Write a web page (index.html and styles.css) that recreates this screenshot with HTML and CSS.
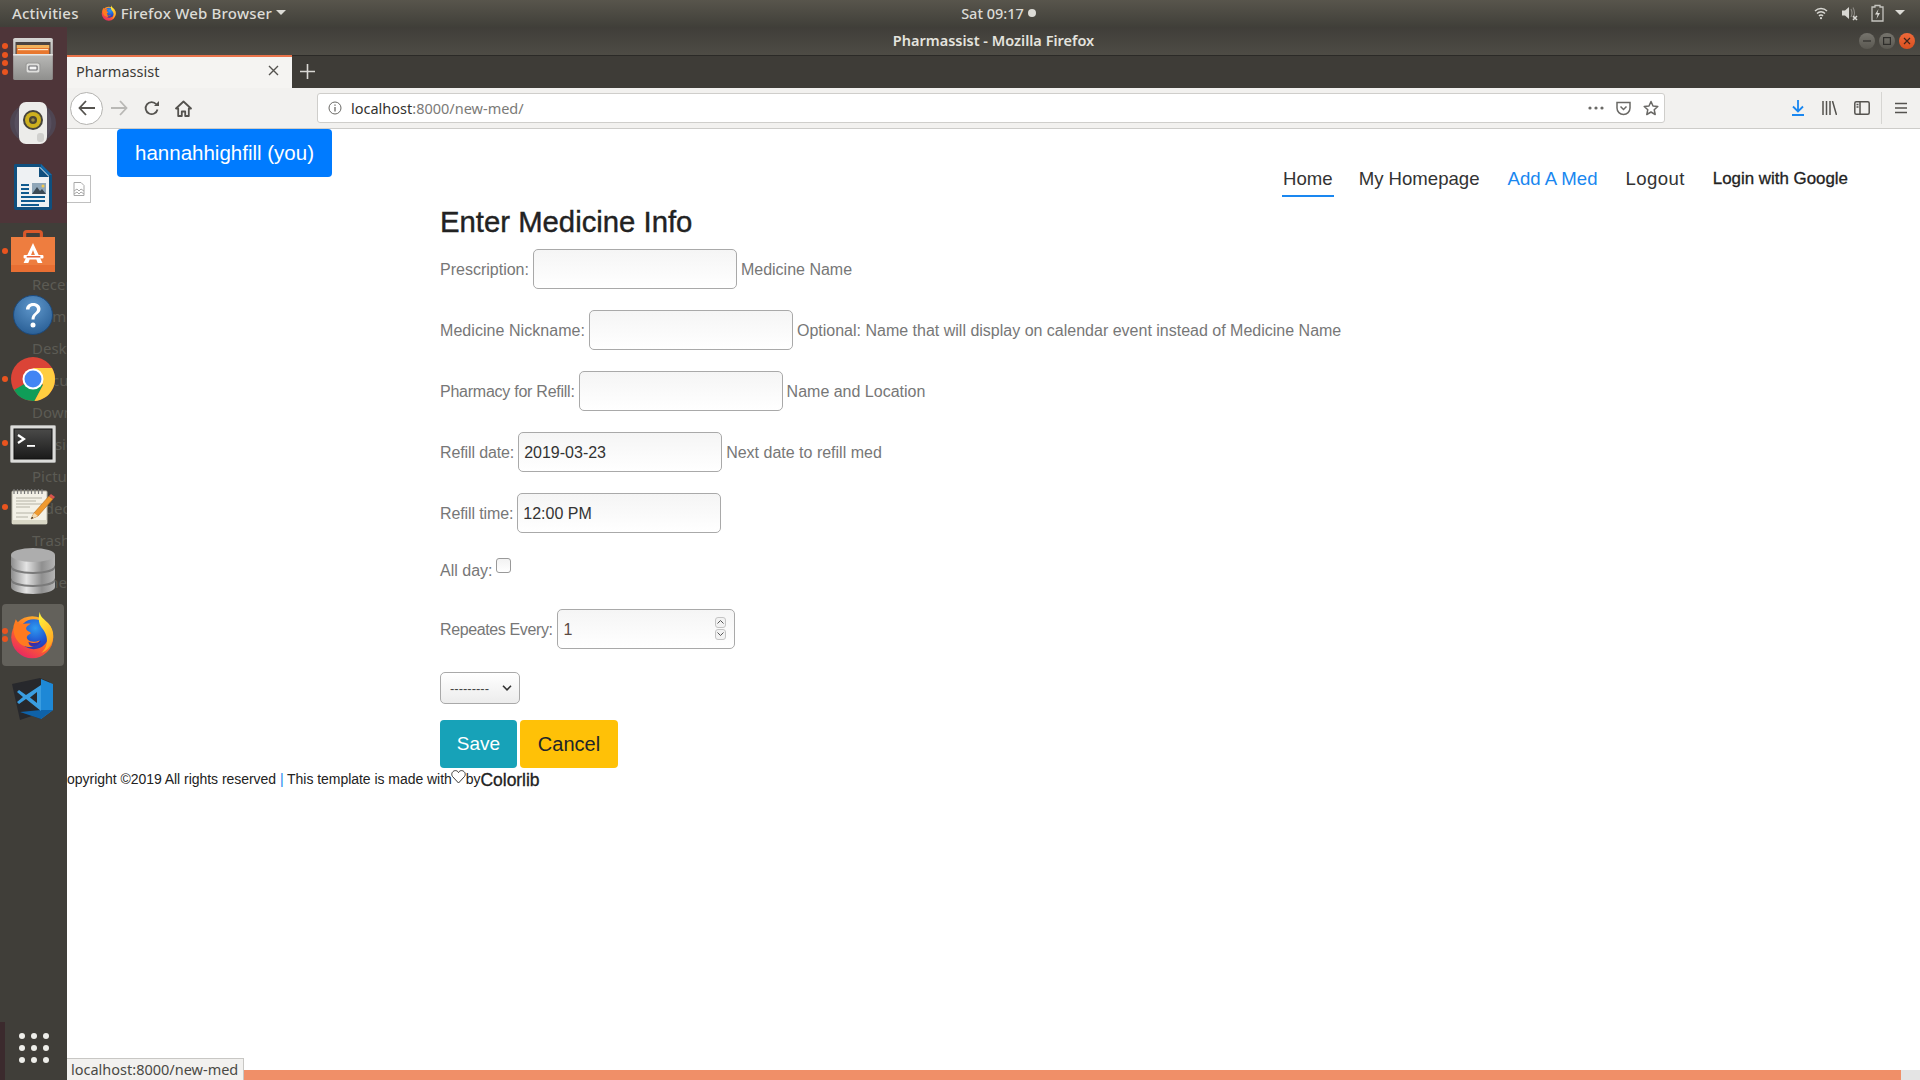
FILE: index.html
```html
<!DOCTYPE html>
<html lang="en">
<head>
    <meta charset="UTF-8">
    <title>Pharmassist - Mozilla Firefox</title>
    <link rel="stylesheet" href="styles.css">
</head>
<body>
    <!-- GNOME top bar -->
    <div class="topbar">
        <div class="topbar-left">
            <span>Activities</span>
            <span class="app-menu">
                <svg class="fx-small" width="16" height="16" viewBox="0 0 32 32"><use href="#fx"/></svg>
                Firefox Web Browser
                <span class="caret"></span>
            </span>
        </div>
        <div class="clock">Sat 09:17 <span class="clock-dot"></span></div>
        <div class="tray">
            <svg width="14" height="14" viewBox="0 0 14 14" fill="none" stroke="#d8d7d2" stroke-width="1.4"><path d="M1 5a8.5 8.5 0 0 1 12 0M3 7.500a5.500 5.500 0 0 1 8 0M5 10a2.600 2.600 0 0 1 4 0"/><circle cx="7" cy="12.200" r="1.100" fill="#d8d7d2" stroke="none"/></svg>
            <svg width="17" height="16" viewBox="0 0 17 16"><path d="M1 5.500h3L8 2v12l-4-3.500H1z" fill="#d8d7d2"/><path d="M10 4q2 4 0 8M12 2.500q3 5.500 0 11" fill="none" stroke="#8d8b85" stroke-width="1.100"/><path d="M12 11l4 4M16 11l-4 4" stroke="#d8d7d2" stroke-width="1.500"/></svg>
            <svg width="13" height="18" viewBox="0 0 13 18"><path d="M4 1.500h5v1.500h3v14H1V3h3z" fill="none" stroke="#c6c5c0" stroke-width="1.300"/><path d="M7.500 5L4 10.500h2.500L5.500 15 9 9H6.500z" fill="#d8d7d2"/></svg>
            <span class="caret caret-tray"></span>
        </div>
    </div>

    <div class="desktop">
        <!-- Ubuntu dock -->
        <aside class="dock">
            <ul class="ghost-places">
                <li>Recent</li>
                <li>Home</li>
                <li>Desktop</li>
                <li>Documents</li>
                <li>Downloads</li>
                <li>Music</li>
                <li>Pictures</li>
                <li>Videos</li>
                <li>Trash</li>
                <li class="ghost-other">Other</li>
            </ul>
            <div class="dock-tint"></div>
            <div class="dock-foot"></div>

            <div class="dock-item">
                <span class="dots"><i></i><i></i><i></i><i></i></span>
                <svg width="42" height="44" viewBox="0 0 36 44" preserveAspectRatio="none">
                    <defs><linearGradient id="cab" x1="0" y1="0" x2="0" y2="1"><stop offset="0" stop-color="#d4d4d2"/><stop offset="1" stop-color="#8f8f8d"/></linearGradient></defs>
                    <rect x="1" y="1" width="34" height="42" rx="1.500" fill="url(#cab)"/>
                    <rect x="3" y="5" width="30" height="13" fill="#4a4340"/>
                    <rect x="4" y="8" width="28" height="3" fill="#f2b25a"/>
                    <rect x="4" y="11" width="28" height="6" fill="#e8772e"/>
                    <rect x="5" y="12" width="26" height="1.200" fill="#fbe6c8"/>
                    <rect x="1" y="17" width="34" height="1.500" fill="#e8e8e6"/>
                    <rect x="12" y="26" width="12" height="10" rx="2" fill="#dededc" stroke="#9a9a98"/>
                    <rect x="14.500" y="29" width="7" height="4" rx=".5" fill="#f4f4f4" stroke="#66666a"/>
                </svg>
            </div>
            <div class="dock-item">
                <svg width="48" height="46" viewBox="0 0 48 46">
                    <ellipse cx="24" cy="23" rx="23" ry="20" fill="#4f5f78" opacity=".4"/>
                    <ellipse cx="24" cy="23" rx="18.500" ry="20" fill="#5e5668" opacity=".6"/>
                    <rect x="10" y="2" width="28" height="42" rx="7" fill="#ececea"/>
                    <circle cx="24" cy="20" r="10" fill="#45433c"/>
                    <circle cx="24" cy="20" r="8" fill="#cdb01f"/>
                    <circle cx="24" cy="20" r="4" fill="#4a4434"/>
                    <circle cx="24" cy="20" r="1.800" fill="#9a8a44"/>
                    <rect x="28" y="33" width="7" height="9" rx="3" fill="#d0d0ce"/>
                </svg>
            </div>
            <div class="dock-item">
                <svg width="40" height="48" viewBox="0 0 40 48">
                    <path d="M2 1h26l11 11v33a2 2 0 0 1-2 2H3a2 2 0 0 1-2-2V2z" fill="#0f4f7e"/>
                    <path d="M28 1l11 11H28z" fill="#1469a6"/>
                    <path d="M4 4h23l9 9v31H4z" fill="#eef1f3"/>
                    <path d="M26 4l10 10H26z" fill="#0f4f7e"/>
                    <rect x="8" y="21" width="8" height="2" fill="#0f5a8e"/>
                    <rect x="8" y="25" width="8" height="2" fill="#0f5a8e"/>
                    <rect x="8" y="29" width="8" height="2" fill="#0f5a8e"/>
                    <rect x="8" y="33" width="24" height="2" fill="#0f5a8e"/>
                    <rect x="8" y="37" width="24" height="2" fill="#0f5a8e"/>
                    <rect x="8" y="41" width="18" height="2" fill="#0f5a8e"/>
                    <rect x="19" y="20" width="14" height="11" fill="#8fa6b8"/>
                    <path d="M19 31l5-7 3 4 2-2 4 5z" fill="#3c4a55"/>
                    <circle cx="30" cy="23" r="1.500" fill="#f2c94c"/>
                </svg>
            </div>
            <div class="dock-item">
                <span class="dots"><i></i></span>
                <svg width="44" height="44" viewBox="0 0 42 44" preserveAspectRatio="none">
                    <path d="M13 11V4.500A2 2 0 0 1 15 2.500h12a2 2 0 0 1 2 2V11" fill="none" stroke="#d9582a" stroke-width="3"/>
                    <rect x="0" y="8" width="42" height="35" fill="#ee7d3f"/>
                    <rect x="0" y="36" width="42" height="7" fill="#e86f33"/>
                    <path d="M21 14l9 20h-4.500l-1.300-3.500h-6.400L16.500 34H12zM21 21l-2 5.500h4z" fill="#fff"/>
                    <rect x="12" y="26" width="19" height="3.500" rx="1" fill="#fff"/>
                    <rect x="15" y="27" width="13" height="1.500" fill="#e8643a"/>
                </svg>
            </div>
            <div class="dock-item">
                <svg width="40" height="40" viewBox="0 0 40 40">
                    <defs><radialGradient id="help" cx=".5" cy=".3" r=".8"><stop offset="0" stop-color="#5f97cb"/><stop offset="1" stop-color="#23588f"/></radialGradient></defs>
                    <circle cx="20" cy="20" r="19.500" fill="url(#help)" stroke="#1d4a7c"/>
                    <path d="M13 14.500c0-4 3.200-6.500 7.200-6.500 4.200 0 7.300 2.400 7.300 6 0 5-6 5-6 10.500h-3c0-6.500 5.500-6.500 5.500-10.300 0-1.900-1.500-3.200-3.700-3.200-2.300 0-3.800 1.400-3.800 3.500z" fill="#fff"/>
                    <circle cx="20" cy="30" r="2.500" fill="#fff"/>
                </svg>
            </div>
            <div class="dock-item">
                <span class="dots"><i></i></span>
                <svg width="44" height="44" viewBox="0 0 44 44">
                    <circle cx="22" cy="22" r="22" fill="#db4437"/>
                    <path d="M22 22L3 33A22 22 0 0 0 22 44h1.500L32 28z" fill="#0f9d58"/>
                    <path d="M22 11h19a22 22 0 0 1-17.500 33L32 28z" fill="#ffcd40"/>
                    <circle cx="22" cy="22" r="10.500" fill="#fff"/>
                    <circle cx="22" cy="22" r="8.500" fill="#4285f4"/>
                </svg>
            </div>
            <div class="dock-item dock-term">
                <span class="dots"><i></i></span>
                <svg width="46" height="38" viewBox="0 0 46 38">
                    <defs><linearGradient id="term" x1="0" y1="0" x2="0" y2="1"><stop offset="0" stop-color="#4a4a49"/><stop offset="1" stop-color="#1a1a1a"/></linearGradient></defs>
                    <rect x=".5" y=".5" width="45" height="37" rx="1" fill="#dcdcda" stroke="#a9a9a7"/>
                    <rect x="4" y="4" width="38" height="30" fill="url(#term)" stroke="#111"/>
                    <path d="M8 10l6 4-6 4" fill="none" stroke="#fff" stroke-width="2.200"/>
                    <rect x="17" y="20" width="8" height="1.800" fill="#fff"/>
                </svg>
            </div>
            <div class="dock-item">
                <span class="dots"><i></i></span>
                <svg width="46" height="38" viewBox="0 0 46 38">
                    <rect x="2" y="3" width="35" height="33" rx="1" fill="#f3f1e7" stroke="#b7b5a8"/>
                    <rect x="2" y="32" width="35" height="4" fill="#d9d7c6"/>
                    <path d="M4 1v5M7.500 1v5M11 1v5M14.500 1v5M18 1v5M21.500 1v5M25 1v5M28.500 1v5M32 1v5" stroke="#777" stroke-width="1.200"/>
                    <path d="M6 10h26M6 13h20M6 16h26M6 19h14M6 25h20M6 29h12" stroke="#b5b3a6" stroke-width="1"/>
                    <path d="M21 31l3-6L39 8l4 3-15 17z" fill="#ef9a30" stroke="#b66a1a" stroke-width=".6"/>
                    <path d="M39 8l2-2 4 3-2 2z" fill="#d9534f"/>
                    <path d="M21 31l3-6 4 3z" fill="#f3dcb4"/>
                    <path d="M21 31l1-2.200 1.500 1.200z" fill="#222"/>
                </svg>
            </div>
            <div class="dock-item">
                <svg width="46" height="48" viewBox="0 0 46 48">
                    <defs><linearGradient id="disk" x1="0" y1="0" x2="1" y2="0"><stop offset="0" stop-color="#8c8c8c"/><stop offset=".35" stop-color="#e4e4e4"/><stop offset=".7" stop-color="#8f8f8f"/><stop offset="1" stop-color="#b5b5b5"/></linearGradient></defs>
                    <path d="M1 34v6c0 4 10 7 22 7s22-3 22-7v-6z" fill="url(#disk)"/>
                    <ellipse cx="23" cy="34" rx="22" ry="6" fill="#7a7a7a"/>
                    <path d="M1 21v10c0 4 10 7 22 7s22-3 22-7V21z" fill="url(#disk)"/>
                    <ellipse cx="23" cy="21" rx="22" ry="6" fill="#7a7a7a"/>
                    <path d="M1 8v10c0 4 10 7 22 7s22-3 22-7V8z" fill="url(#disk)"/>
                    <ellipse cx="23" cy="8" rx="22" ry="7" fill="#adadad"/>
                </svg>
            </div>
            <div class="dock-item dock-active">
                <span class="dots"><i></i><i></i></span>
                <svg width="48" height="48" viewBox="0 0 32 32"><use href="#fx"/></svg>
            </div>
            <div class="dock-item">
                <svg width="42" height="42" viewBox="0 0 42 42">
                    <path d="M0 6L28 0l10 4v28L8 42z" fill="#27282c"/>
                    <path d="M29 1l12 5v26L29 41z" fill="#1e88d6"/>
                    <path d="M29 1v40L8 34z" fill="#27282c"/>
                    <path d="M8 34l21-2 12 0-12 9z" fill="#0f62a8"/>
                    <path d="M29 7v26L14 21 7 26l-2-2 6-5-6-5 2-2 7 5z" fill="#3a9de0"/>
                    <path d="M25 14v11l-7-5.500z" fill="#27282c"/>
                </svg>
            </div>
            <div class="dock-apps">
                <i></i><i></i><i></i><i></i><i></i><i></i><i></i><i></i><i></i>
            </div>
        </aside>

        <div class="firefox">
            <!-- window title -->
            <div class="titlebar">
                <span>Pharmassist - Mozilla Firefox</span>
                <div class="window-buttons">
                    <span class="win-btn"><svg width="8" height="8" viewBox="0 0 8 8"><path d="M0 4h8" stroke="#2f2e2b" stroke-width="1.200"/></svg></span>
                    <span class="win-btn"><svg width="8" height="8" viewBox="0 0 8 8"><rect x=".6" y=".6" width="6.800" height="6.800" fill="none" stroke="#2f2e2b" stroke-width="1.200"/></svg></span>
                    <span class="win-btn win-close"><svg width="8" height="8" viewBox="0 0 8 8"><path d="M1 1l6 6M7 1L1 7" stroke="#40241a" stroke-width="1.200"/></svg></span>
                </div>
            </div>

            <!-- tab strip -->
            <div class="tabstrip">
                <div class="tab">
                    <span>Pharmassist</span>
                    <svg width="11" height="11" viewBox="0 0 11 11"><path d="M1 1l9 9M10 1l-9 9" stroke="#55534f" stroke-width="1.400"/></svg>
                </div>
                <svg class="new-tab" width="15" height="15" viewBox="0 0 15 15"><path d="M7.500 0v15M0 7.500h15" stroke="#d9d8d4" stroke-width="1.600"/></svg>
            </div>

            <!-- nav bar -->
            <div class="navbar">
                <span class="back-btn">
                    <svg width="18" height="16" viewBox="0 0 18 16" fill="none" stroke="#55534f" stroke-width="1.800"><path d="M8 1L1.500 8 8 15M2 8h15"/></svg>
                </span>
                <svg class="fwd" width="18" height="16" viewBox="0 0 18 16" fill="none" stroke="#b9b8b5" stroke-width="1.800"><path d="M10 1l6.500 7L10 15M16 8H1"/></svg>
                <svg class="reload" width="16" height="16" viewBox="0 0 16 16" fill="none" stroke="#55534f" stroke-width="1.800"><path d="M13.500 9.500a6 6 0 1 1-1.200-5.200"/><path d="M15 1v5h-5z" fill="#55534f" stroke="none"/></svg>
                <svg class="home" width="17" height="17" viewBox="0 0 17 17"><path d="M8.500 1.500L1 8.500h2.200V16h3.600v-4.500h3.400V16h3.600V8.500H16z" fill="none" stroke="#55534f" stroke-width="1.800" stroke-linejoin="round"/></svg>
                <div class="urlbar">
                    <svg width="14" height="14" viewBox="0 0 14 14" fill="none" stroke="#6a6966"><circle cx="7" cy="7" r="6"/><path d="M7 6v4.500M7 3.500v1.200" stroke-width="1.300"/></svg>
                    <span class="url"><span class="url-host">localhost</span>:8000/new-med/</span>
                    <span class="url-actions">
                        <svg width="16" height="4" viewBox="0 0 16 4" fill="#6a6966"><circle cx="2" cy="2" r="1.600"/><circle cx="8" cy="2" r="1.600"/><circle cx="14" cy="2" r="1.600"/></svg>
                        <svg width="15" height="15" viewBox="0 0 15 15" fill="none" stroke="#6a6966" stroke-width="1.500"><path d="M1 1.500h13v5.500a6.500 6.500 0 0 1-13 0z"/><path d="M4.500 5.500l3 3 3-3"/></svg>
                        <svg width="16" height="16" viewBox="0 0 16 16" fill="none" stroke="#6a6966" stroke-width="1.500" stroke-linejoin="round"><path d="M8 1.500l2 4.500 4.800.5-3.600 3.200 1 4.800L8 12l-4.200 2.500 1-4.800L1.200 6.500 6 6z"/></svg>
                    </span>
                </div>
                <div class="toolbar-right">
                    <svg width="14" height="16" viewBox="0 0 14 16" fill="none" stroke="#1a87f0" stroke-width="1.800"><path d="M7 0v11M2 6.500L7 11.500l5-5M1 15h12"/></svg>
                    <svg width="15" height="14" viewBox="0 0 15 14" fill="none" stroke="#55534f" stroke-width="1.500"><path d="M1 0v14M4.500 0v14M8 0v14M10.500 0l4 14"/></svg>
                    <svg width="16" height="14" viewBox="0 0 16 14" fill="none" stroke="#55534f" stroke-width="1.500"><rect x=".8" y=".8" width="14.400" height="12.400" rx="1.500"/><path d="M6 1v12M2.500 3.500h2M2.500 6h2"/></svg>
                    <span class="toolbar-sep"></span>
                    <svg width="12" height="12" viewBox="0 0 12 12" stroke="#55534f" stroke-width="1.600"><path d="M0 1.500h12M0 6h12M0 10.500h12"/></svg>
                </div>
            </div>

            <!-- page -->
            <div class="page">
                <header class="site-header">
                    <div class="site-user">
                        <a class="btn btn-user">hannahhighfill (you)</a>
                        <span class="broken-img">
                            <svg width="12" height="14" viewBox="0 0 12 14" fill="none" stroke="#a8a8a8"><path d="M1 .5h7l3 3v10H1z"/><path d="M1 9l3-2 2 2 2-2 3 2M1 12l3-2 2 2 2-2 3 2"/></svg>
                        </span>
                    </div>
                    <nav class="site-nav">
                        <a class="active">Home</a>
                        <a>My Homepage</a>
                        <a class="current">Add A Med</a>
                        <a class="logout">Logout</a>
                        <a class="login">Login with Google</a>
                    </nav>
                </header>

                <main class="content">
                    <h3>Enter Medicine Info</h3>
                    <div class="field">
                        <label>Prescription:</label>
                        <input type="text">
                        <span class="help">Medicine Name</span>
                    </div>
                    <div class="field">
                        <label class="loose">Medicine Nickname:</label>
                        <input type="text">
                        <span class="help">Optional: Name that will display on calendar event instead of Medicine Name</span>
                    </div>
                    <div class="field">
                        <label class="tight">Pharmacy for Refill:</label>
                        <input type="text">
                        <span class="help">Name and Location</span>
                    </div>
                    <div class="field">
                        <label class="tighter">Refill date:</label>
                        <input type="text" value="2019-03-23">
                        <span class="help">Next date to refill med</span>
                    </div>
                    <div class="field">
                        <label class="tighter">Refill time:</label>
                        <input type="text" value="12:00 PM">
                    </div>
                    <div class="field field-short">
                        <label>All day:</label>
                        <input type="checkbox" class="check">
                    </div>
                    <div class="field">
                        <label class="tightest">Repeates Every:</label>
                        <span class="number-wrap">
                            <input type="text" class="number" value="1">
                            <span class="spin">
                                <i><svg width="7" height="4" viewBox="0 0 7 4" fill="none" stroke="#555"><path d="M.5 3.500l3-3 3 3"/></svg></i>
                                <i><svg width="7" height="4" viewBox="0 0 7 4" fill="none" stroke="#555"><path d="M.5.500l3 3 3-3"/></svg></i>
                            </span>
                        </span>
                    </div>
                    <div class="select-row">
                        <span class="select-box">
                            <select><option>---------</option></select>
                            <svg width="10" height="6" viewBox="0 0 10 6" fill="none" stroke="#333" stroke-width="1.600"><path d="M1 .8l4 4 4-4"/></svg>
                        </span>
                    </div>
                    <div class="actions">
                        <a class="btn btn-save">Save</a>
                        <a class="btn btn-cancel">Cancel</a>
                    </div>
                </main>

                <footer class="site-footer">Copyright &copy;2019 All rights reserved <span class="pipe">|</span> This template is made with<svg class="heart" width="15" height="14" viewBox="0 0 15 14" fill="none" stroke="#222" stroke-width=".9"><path d="M7.500 13L1.500 6.500C-.5 3.500 2 .6 4.500.6c1.300 0 2.300.7 3 2 .7-1.300 1.700-2 3-2 2.500 0 5 2.900 3 5.900z"/></svg>by<a class="colorlib">Colorlib</a></footer>

                <div class="page-bar">
                    <div class="page-bar-fill"></div>
                    <div class="page-bar-rest"></div>
                </div>
                <div class="status">localhost:8000/new-med</div>
            </div>
        </div>
    </div>

    <!-- shared firefox logo -->
    <svg width="0" height="0" class="defs">
        <defs>
            <linearGradient id="fxo" x1=".8" y1="0" x2=".2" y2="1"><stop offset="0" stop-color="#ffc22e"/><stop offset=".5" stop-color="#ff6a24"/><stop offset="1" stop-color="#e6206a"/></linearGradient>
            <linearGradient id="fxy" x1=".3" y1="0" x2=".7" y2="1"><stop offset="0" stop-color="#fff03a"/><stop offset="1" stop-color="#ff9a1f"/></linearGradient>
            <radialGradient id="fxb" cx=".55" cy=".3" r=".8"><stop offset="0" stop-color="#2f9bf0"/><stop offset=".6" stop-color="#1f52d0"/><stop offset="1" stop-color="#3a2a9c"/></radialGradient>
            <symbol id="fx" viewBox="0 0 32 32">
                <circle cx="15.500" cy="17.500" r="14" fill="url(#fxo)"/>
                <circle cx="16.500" cy="15.500" r="10" fill="url(#fxb)"/>
                <path d="M20.500.5c.2 3.500 3 5 6 8 4 4.500 4 11.500 0 16-1.500 1.800-3.200 2.800-5 3.500 3-2.500 4.500-6.500 3.500-11-.8-3.500-3-5.200-4.500-8-.9-2.500-.8-5.800 0-8.500z" fill="url(#fxy)"/>
                <path d="M3 10l1.500-4.500L7 9c2.500-.5 5-1 7.500-.5-1.500 1-3.500 2-3 3.500.5 1.800 3 1.500 3 3-2 1-3.500 2-2 4 1.500 1.800 5 2 8 .5-1.500 3.500-6 5.500-10 4C6 22 3 17 3 12z" fill="#ff7a1f"/>
                <path d="M13 20.500c2.500 1.300 6 1.200 8.500-.8-1 2.600-3.500 4-6 3.800-1.700-.2-2.500-1.600-2.500-3z" fill="#3a2fa8"/>
            </symbol>
        </defs>
    </svg>
</body>
</html>
```

FILE: styles.css
```css
html, body {
    margin: 0;
    padding: 0;
    height: 1080px;
    overflow: hidden;
}

body {
    display: flex;
    flex-direction: column;
    background: #3f3d38;
    font-family: "Liberation Sans", sans-serif;
}

.defs {
    position: absolute;
}

/* top bar */

.topbar {
    display: grid;
    grid-template-columns: 1fr auto 1fr;
    align-items: center;
    height: 27px;
    flex: none;
    padding: 0 15px 2px 12px;
    box-sizing: border-box;
    background: linear-gradient(to bottom, #58554c, #403f39);
    color: #dcdbd6;
    font-family: "Noto Sans", sans-serif;
    font-size: 15px;
    font-weight: 500;
}

.topbar-left {
    display: flex;
    align-items: center;
    gap: 22px;
    letter-spacing: .2px;
}

.app-menu {
    display: flex;
    align-items: center;
    gap: 4px;
}

.caret {
    display: inline-block;
    width: 0;
    height: 0;
    border-left: 5px solid transparent;
    border-right: 5px solid transparent;
    border-top: 5px solid #dcdbd6;
}

.caret-tray {
    margin-left: -2px;
}

.clock {
    display: flex;
    align-items: center;
    gap: 4px;
    margin-left: 80px;
    font-size: 14.500px;
}

.clock-dot {
    width: 8px;
    height: 8px;
    border-radius: 50%;
    background: #dcdbd6;
}

.tray {
    display: flex;
    align-items: center;
    justify-content: flex-end;
    gap: 13px;
}

/* dock */

.desktop {
    display: flex;
    height: 1053px;
}

.dock {
    position: relative;
    display: flex;
    flex-direction: column;
    width: 67px;
    flex: none;
    background: #403e39;
    overflow: hidden;
}

.dock-tint {
    position: absolute;
    left: 0;
    top: 0;
    width: 100%;
    height: 196px;
    background: #4e3539;
}

.dock-foot {
    position: absolute;
    left: 0;
    bottom: 0;
    width: 5px;
    height: 58px;
    background: #3b2a2d;
}

.ghost-places {
    position: absolute;
    left: 32px;
    top: 241px;
    margin: 0;
    padding: 0;
    list-style: none;
    color: #5c5b54;
    font-family: "Noto Sans", sans-serif;
    font-size: 15px;
}

.ghost-places li {
    height: 32px;
    line-height: 32px;
}

.ghost-other {
    margin-top: 10px;
}

.dock-item {
    position: relative;
    display: flex;
    align-items: center;
    justify-content: center;
    box-sizing: border-box;
    height: 64px;
    padding-right: 1px;
    flex: none;
}

.dock-term {
    padding-top: 2px;
}

.dock-active::before {
    content: "";
    position: absolute;
    left: 2px;
    top: 1px;
    right: 3px;
    bottom: 1px;
    border-radius: 4px;
    background: #63615b;
}

.dock-item svg {
    position: relative;
}

.dots {
    position: absolute;
    left: 2px;
    top: 0;
    bottom: 0;
    display: flex;
    flex-direction: column;
    justify-content: center;
    gap: 2.500px;
    z-index: 1;
}

.dots i {
    display: block;
    width: 6px;
    height: 6px;
    border-radius: 50%;
    background: #e9541f;
}

.dock-apps {
    position: relative;
    display: grid;
    grid-template-columns: repeat(3, 6px);
    gap: 6px;
    margin-top: auto;
    margin-bottom: 17px;
    justify-content: center;
}

.dock-apps i {
    width: 6px;
    height: 6px;
    border-radius: 50%;
    background: #eeeeea;
}

/* firefox chrome */

.firefox {
    display: flex;
    flex-direction: column;
    flex: 1;
    min-width: 0;
}

.titlebar {
    position: relative;
    display: flex;
    align-items: center;
    justify-content: center;
    box-sizing: border-box;
    height: 28px;
    padding-bottom: 2px;
    flex: none;
    background: linear-gradient(to bottom, #403e39, #4e4c45);
    color: #e4e3de;
    font-family: "Noto Sans", sans-serif;
    font-size: 14.500px;
    font-weight: 600;
}

.window-buttons {
    position: absolute;
    right: 5px;
    top: 6px;
    display: flex;
    gap: 4px;
}

.win-btn {
    display: flex;
    align-items: center;
    justify-content: center;
    width: 16px;
    height: 16px;
    border-radius: 50%;
    background: linear-gradient(to bottom, #76746d, #5a5851);
}

.win-close {
    background: linear-gradient(to bottom, #f0693a, #d9501f);
}

.tabstrip {
    display: flex;
    align-items: center;
    height: 33px;
    background: #3e3c37;
    flex: none;
    box-shadow: inset 0 1px 0 #2b2a27;
}

.tab {
    display: flex;
    align-items: center;
    justify-content: space-between;
    box-sizing: border-box;
    width: 225px;
    height: 33px;
    padding: 0 13px 4px 9px;
    border-top: 2px solid #e9734a;
    background: #f5f4f2;
    color: #3c3b37;
    font-family: "Noto Sans", sans-serif;
    font-size: 14.500px;
}

.new-tab {
    margin-left: 8px;
}

.navbar {
    display: flex;
    align-items: center;
    height: 41px;
    box-sizing: border-box;
    flex: none;
    background: #f2f1ef;
    border-bottom: 1px solid #cdccc9;
}

.back-btn {
    display: flex;
    align-items: center;
    justify-content: center;
    width: 33px;
    height: 33px;
    margin-left: 3px;
    border: 1px solid #b4b3b0;
    border-radius: 50%;
    box-sizing: border-box;
    background: #fff;
}

.fwd {
    margin-left: 7px;
}

.reload {
    margin-left: 16px;
}

.home {
    margin-left: 15px;
}

.urlbar {
    display: flex;
    align-items: center;
    box-sizing: border-box;
    width: 1348px;
    height: 30px;
    margin-left: 125px;
    padding: 0 5px 0 10px;
    background: #fff;
    border: 1px solid #cfcecb;
    border-radius: 3px;
}

.url {
    margin-left: 9px;
    color: #7b7a77;
    font-family: "Noto Sans", sans-serif;
    font-size: 14.500px;
}

.url-host {
    color: #33322f;
}

.url-actions {
    display: flex;
    align-items: center;
    gap: 12px;
    margin-left: auto;
}

.toolbar-right {
    display: flex;
    align-items: center;
    gap: 17px;
    margin-left: auto;
    padding-right: 13px;
}

.toolbar-sep {
    width: 1px;
    height: 32px;
    margin: 0 -4px 0 -6px;
    background: #d6d5d2;
}

/* page */

.page {
    position: relative;
    display: flex;
    flex-direction: column;
    flex: 1;
    min-height: 0;
    background: #fff;
    overflow: hidden;
}

.site-header {
    display: flex;
    justify-content: space-between;
    height: 75px;
    flex: none;
}

.site-user {
    display: flex;
    flex-direction: column;
    align-items: flex-start;
}

.btn {
    display: inline-flex;
    align-items: center;
    justify-content: center;
    box-sizing: border-box;
    border-radius: 4px;
    font-size: 20px;
}

.btn-user {
    width: 215px;
    height: 48px;
    margin-left: 50px;
    background: #007bff;
    color: #fff;
    font-size: 20.500px;
}

.broken-img {
    display: flex;
    align-items: center;
    justify-content: center;
    width: 24px;
    height: 28px;
    margin-top: -2px;
    box-sizing: border-box;
    border: 1px solid #c0c0c0;
    border-left: none;
}

.site-nav {
    display: flex;
    align-items: flex-start;
    gap: 28px;
    padding: 38px 72px 0 0;
    font-size: 18.600px;
    color: #333;
}

.site-nav a {
    line-height: 24px;
}

.site-nav .active {
    border-bottom: 2px solid #1a87f0;
    padding: 0 1px 4px;
    margin: 0 -3px 0 0;
}

.site-nav .current {
    color: #1a87f0;
}

.site-nav .logout {
    letter-spacing: .4px;
}

.site-nav .login {
    font-size: 16.900px;
    color: #222;
    -webkit-text-stroke: .3px #222;
}

.content {
    padding-left: 373px;
    flex: none;
    color: #777;
    font-size: 16px;
}

.content h3 {
    margin: 1px 0 8px;
    height: 34px;
    line-height: 34px;
    color: #222;
    font-size: 29.300px;
    font-weight: 500;
    -webkit-text-stroke: .4px #222;
}

.loose {
    letter-spacing: .05px;
}

.tight {
    letter-spacing: -.25px;
}

.tighter {
    letter-spacing: -.12px;
}

.tightest {
    letter-spacing: -.38px;
}

.field {
    display: flex;
    align-items: center;
    gap: 4px;
    height: 45px;
    margin-bottom: 16px;
}

.field-short {
    height: 39px;
}

.field-short label {
    margin-top: -2px;
}

.field input[type="text"] {
    box-sizing: border-box;
    width: 204px;
    height: 40px;
    margin-top: -2px;
    padding: 2px 5px 0;
    border: 1px solid #a9a9a9;
    border-radius: 5px;
    background: linear-gradient(to bottom, #f5f5f5, #fff);
    color: #333;
    font-family: "Liberation Sans", sans-serif;
    font-size: 16px;
}

.field input.check {
    appearance: none;
    width: 15px;
    height: 15px;
    margin: -12px 0 0 0;
    border: 1px solid #999;
    border-radius: 3px;
    background: linear-gradient(to bottom, #f2f2f2, #fff);
}

.number-wrap {
    position: relative;
    display: block;
}

.field input.number {
    width: 178px;
    padding: 2px 6px 0;
    color: #5b4a42;
}

.spin {
    position: absolute;
    right: 9px;
    top: 6px;
    display: flex;
    flex-direction: column;
    gap: 1px;
}

.spin i {
    display: flex;
    align-items: center;
    justify-content: center;
    width: 11px;
    height: 11px;
    box-sizing: border-box;
    border: 1px solid #c4c4c4;
    border-radius: 3px;
    background: #f2f2f2;
}

.select-row {
    height: 39px;
    margin-top: 20px;
}

.select-box {
    position: relative;
    display: inline-block;
}

.select-box select {
    appearance: none;
    display: block;
    box-sizing: border-box;
    width: 80px;
    height: 32px;
    padding: 0 0 0 9px;
    border: 1px solid #a9a9a9;
    border-radius: 5px;
    background: linear-gradient(to bottom, #fff, #ececec);
    color: #444;
    font-family: "Liberation Sans", sans-serif;
    font-size: 13px;
}

.select-box svg {
    position: absolute;
    right: 8px;
    top: 13px;
}

.actions {
    display: flex;
    gap: 3px;
    margin-top: 9px;
}

.btn-save {
    width: 77px;
    height: 48px;
    background: #17a2b8;
    color: #fff;
    font-size: 19px;
}

.btn-cancel {
    width: 98px;
    height: 48px;
    background: #ffc107;
    color: #212529;
}

.site-footer {
    margin: 1px 0 0 -10px;
    color: #222;
    font-size: 14px;
    line-height: 20px;
    letter-spacing: -.04px;
    white-space: nowrap;
    flex: none;
}

.pipe {
    color: #1a87f0;
}

.heart {
    margin: 0 0 7px -1px;
    vertical-align: middle;
}

.colorlib {
    font-size: 17.500px;
    font-weight: 500;
    vertical-align: -2px;
    -webkit-text-stroke: .3px #222;
}

.page-bar {
    display: flex;
    height: 10px;
    margin-top: auto;
    flex: none;
}

.page-bar-fill {
    flex: 1;
    background: #f08f68;
}

.page-bar-rest {
    width: 19px;
    background: #e4e4e4;
}

.status {
    position: absolute;
    left: 0;
    bottom: 0;
    box-sizing: border-box;
    width: 177px;
    height: 22px;
    padding-left: 4px;
    line-height: 20px;
    background: #f2f1ef;
    border: 1px solid #c8c7c4;
    border-width: 1px 1px 0 0;
    color: #4a4945;
    font-family: "Noto Sans", sans-serif;
    font-size: 14.500px;
}
```
